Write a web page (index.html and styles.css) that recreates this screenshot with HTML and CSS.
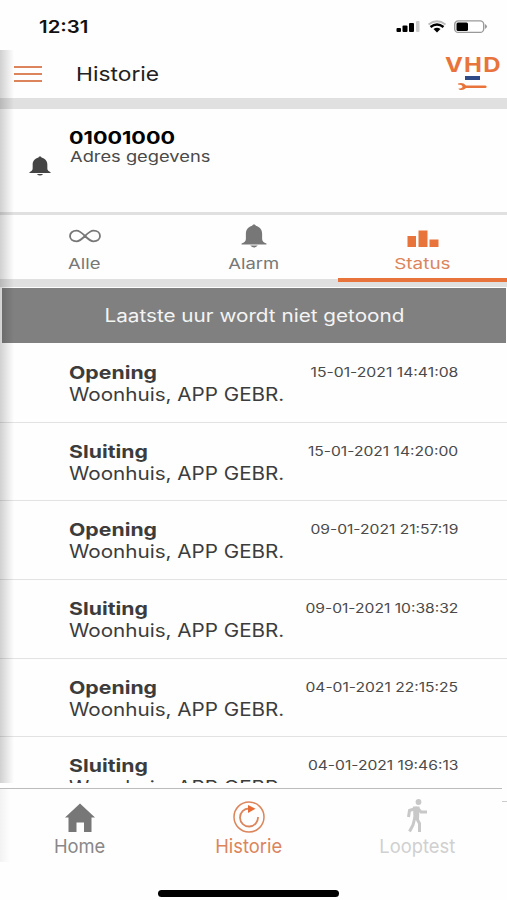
FILE: index.html
```html
<!DOCTYPE html>
<html lang="nl">
<head>
    <meta charset="utf-8">
    <title>Historie</title>
    <link rel="stylesheet" href="styles.css">
</head>
<body>

<!-- Statusbalk -->
<div class="statusbar">
    <span class="clock wide">12:31</span>
    <svg class="status-icons" width="92" height="16" viewBox="0 0 92 16">
        <rect x="0.500" y="8" width="4.500" height="4" rx="1" fill="#000"/>
        <rect x="6.500" y="5.500" width="5" height="6.500" rx="1" fill="#000"/>
        <rect x="13" y="3" width="5" height="9" rx="1" fill="#000"/>
        <rect x="20" y="1" width="3.500" height="11" rx="1" fill="#ccc"/>
        <path d="M32.500 4.500Q41-2 49.500 4.500" fill="none" stroke="#bbb" stroke-width="1.800"/>
        <path d="M34.500 7Q41 2 47.500 7" fill="none" stroke="#000" stroke-width="2.500"/>
        <path d="M37.500 9Q41 6.500 44.500 9L41 12.500Z" fill="#000"/>
        <rect x="58.700" y="0.900" width="29" height="11.500" rx="3.500" fill="none" stroke="#999" stroke-width="1.400"/>
        <rect x="60.500" y="2.500" width="11.500" height="8.500" rx="1.500" fill="#000"/>
        <path d="M89 4q4 2.500 0 5z" fill="#999"/>
    </svg>
</div>

<div class="screen">
    <!-- Kop met menu en logo -->
    <div class="header">
        <div class="menu"><i></i><i></i><i></i></div>
        <h1 class="wide">Historie</h1>
        <div class="logo">
            <span class="logo-text wide">VHD</span>
            <svg width="32" height="17" viewBox="0 0 32 17">
                <rect x="8" y="1" width="15" height="4" fill="#2f4a86"/>
                <path d="M1 8.500Q6 7 9 10.500H28.500Q31 11.800 28.500 13H9Q6 16 2 14.500L1.500 13.500Q5.500 13.500 5.500 11.500Q5 9.500 1 9.500Z" fill="#e8743b"/>
            </svg>
        </div>
    </div>

    <div class="device">
        <svg class="device-bell" width="22" height="20" viewBox="0 0 24 24" preserveAspectRatio="none"><path d="M12 0.500c-1 0-1.500.6-1.700 1.300C6.500 2.800 4 6 4 10v5c0 2-1.500 3.500-3.500 4.500v1h23v-1C21.500 18.500 20 17 20 15v-5c0-4-2.500-7.200-6.300-8.200C13.500 1.100 13 .5 12 .5zM8.500 21.500q3.500 4 7 0z"/></svg>
        <div>
            <div class="device-code wide">01001000</div>
            <div class="device-address wide">Adres gegevens</div>
        </div>
    </div>

    <!-- Tabbladen -->
    <div class="tabs">
        <div class="tab">
            <svg width="34" height="26" viewBox="0 0 34 26"><path d="M17 13C13.500 9.500 11.500 7.700 8.500 7.700C4.500 7.700 2 10 2 13S4.500 18.300 8.500 18.300C11.500 18.300 13.500 16.500 17 13S22.500 7.700 25.500 7.700C29.500 7.700 32 10 32 13S29.500 18.300 25.500 18.300C22.500 18.300 20.500 16.500 17 13Z" fill="none" stroke="#777" stroke-width="1.800"/></svg>
            <span class="wide">Alle</span>
        </div>
        <div class="tab">
            <svg width="26" height="26" viewBox="0 0 24 26" preserveAspectRatio="none"><path d="M12 1.500c-1 0-1.500.6-1.700 1.300C6.500 3.800 4.500 7 4.500 11v5c0 2-1.500 3.500-4 4.500v1h23v-1C21 19.500 19.500 18 19.500 16v-5c0-4-2-7.200-5.800-8.200C13.500 2.100 13 1.500 12 1.500zM8.500 22.500q3.500 4 7 0z" fill="#777"/></svg>
            <span class="wide">Alarm</span>
        </div>
        <div class="tab active">
            <svg width="32" height="26" viewBox="0 0 32 26"><path d="M.5 13h8.500v11H.5zM11.500 7.500h9V24h-9zM22.500 16.500h9V24h-9z" fill="#e8743b"/></svg>
            <span class="wide">Status</span>
        </div>
    </div>

    <div class="notice"><span class="wide">Laatste uur wordt niet getoond</span></div>

    <!-- Meldingen -->
    <div class="events">
        <div class="event">
            <div><b class="wide">Opening</b><p class="wide">Woonhuis, APP GEBR.</p></div>
            <time class="wide">15-01-2021 14:41:08</time>
        </div>
        <div class="event">
            <div><b class="wide">Sluiting</b><p class="wide">Woonhuis, APP GEBR.</p></div>
            <time class="wide">15-01-2021 14:20:00</time>
        </div>
        <div class="event">
            <div><b class="wide">Opening</b><p class="wide">Woonhuis, APP GEBR.</p></div>
            <time class="wide">09-01-2021 21:57:19</time>
        </div>
        <div class="event">
            <div><b class="wide">Sluiting</b><p class="wide">Woonhuis, APP GEBR.</p></div>
            <time class="wide">09-01-2021 10:38:32</time>
        </div>
        <div class="event">
            <div><b class="wide">Opening</b><p class="wide">Woonhuis, APP GEBR.</p></div>
            <time class="wide">04-01-2021 22:15:25</time>
        </div>
        <div class="event">
            <div><b class="wide">Sluiting</b><p class="wide">Woonhuis, APP GEBR.</p></div>
            <time class="wide">04-01-2021 19:46:13</time>
        </div>
    </div>
</div>

<!-- Navigatie onderaan -->
<div class="nav">
    <div class="nav-items">
        <div class="nav-item">
            <svg width="30" height="30" viewBox="0 0 30 30"><path d="M15 .5L30 14.500H26.500V29H19V19.500H11.500V29H3.500V14.500H0Z" fill="#777"/></svg>
            <span class="wide">Home</span>
        </div>
        <div class="nav-item active">
            <svg width="32" height="32" viewBox="0 0 32 32"><circle cx="16" cy="16" r="15" fill="none" stroke="#dc855c" stroke-width="1.500"/><path d="M18 7.500H16A9 9 0 1 0 25 16" fill="none" stroke="#dc855c" stroke-width="1.800"/><path d="M15 4L22.500 7.800L15 12Z" fill="#e86a35"/></svg>
            <span class="wide">Historie</span>
        </div>
        <div class="nav-item disabled">
            <svg width="22" height="34" viewBox="0 0 22 34"><circle cx="12.500" cy="3" r="2.900" fill="#c8c8c8"/><path d="M11 9L3.500 11.500L2.500 18M11.500 9L15 13L21 13M10.500 19L13.500 24.500V33M9 18L7 26L3.500 32.500" fill="none" stroke="#c8c8c8" stroke-width="3"/><path d="M7 7.500H13.500L13 21H7.500Z" fill="#c8c8c8"/></svg>
            <span class="wide">Looptest</span>
        </div>
    </div>
    <div class="nav-edge"></div>
</div>

<div class="home-indicator"></div>

</body>
</html>
```
FILE: styles.css
```css
/* Basis */
body {
    margin: 0;
    width: 507px;
    height: 900px;
    overflow: hidden;
    background: #fefefe;
    color: #3c3c3c;
    font-family: Inter, "Liberation Sans", sans-serif;
}

h1, p {
    margin: 0;
    font-weight: normal;
}

/* Brede letters */
.wide {
    display: block;
    white-space: nowrap;
    transform: scaleX(var(--stretch, 1.2));
    transform-origin: left center;
}

/* Statusbalk */
.statusbar {
    display: flex;
    justify-content: space-between;
    height: 50px;
    padding: 0 19px 0 39px;
    box-sizing: border-box;
}

.clock {
    --stretch: 1.2;
    margin-top: 16px;
    font-size: 17px;
    line-height: 22px;
    font-weight: 600;
    color: #111;
}

.status-icons {
    margin-top: 20px;
}

/* Scherm met schaduw aan de linkerkant */
.screen {
    position: relative;
    height: 733px;
}

.screen::after {
    content: "";
    position: absolute;
    left: 0;
    top: 0;
    width: 14px;
    height: 100%;
    background: linear-gradient(to right, rgba(0, 0, 0, 0.18), rgba(0, 0, 0, 0));
}

.header {
    display: flex;
    height: 48px;
    border-bottom: 11px solid #e0e0e0;
}

.menu {
    display: flex;
    flex-direction: column;
    gap: 4.5px;
    width: 28px;
    margin: 16px 0 0 14px;
}

.menu i {
    height: 2.3px;
    background: #dc855c;
}

.header h1 {
    --stretch: 1.2;
    margin: 12px 0 0 34px;
    font-size: 19px;
    line-height: 25px;
    color: #222;
}

.logo {
    width: 55px;
    margin: 6px 7px 0 auto;
}

.logo-text {
    --stretch: 1.2;
    font-size: 20px;
    line-height: 18px;
    font-weight: 700;
    letter-spacing: 1px;
    color: #e8743b;
}

.logo svg {
    display: block;
    margin: 1px 0 0 12px;
}

/* Aansluiting */
.device {
    display: flex;
    height: 103px;
    border-bottom: 3px solid #e0e0e0;
}

.device-bell {
    margin: 47px 18px 0 29px;
    fill: #444;
}

.device-code {
    --stretch: 1.2;
    margin-top: 18px;
    font-size: 18px;
    line-height: 21px;
    font-weight: 700;
    color: #000;
}

.device-address {
    --stretch: 1.22;
    margin-left: 1px;
    font-size: 15px;
    line-height: 18px;
    color: #4a4a4a;
}

/* Tabbladen */
.tabs {
    display: grid;
    grid-template-columns: repeat(3, 1fr);
    height: 72px;
    background: linear-gradient(to bottom, #fefefe 64px, #e0e0e0 64px);
}

.tab {
    display: flex;
    flex-direction: column;
    align-items: center;
    height: 67px;
    padding-top: 8px;
    box-sizing: border-box;
    font-size: 15px;
    line-height: 18px;
    color: #777;
}

.tab span {
    --stretch: 1.23;
    margin-top: 6px;
    transform-origin: center;
}

.tab.active {
    border-bottom: 4px solid #e8743b;
    color: #dc855c;
}

.tab.active span {
    --stretch: 1.26;
}

.notice {
    display: flex;
    justify-content: center;
    align-items: center;
    height: 55px;
    margin: 1px 1px 0 2px;
    background: #808080;
    color: #f4f4f4;
    font-size: 18px;
}

.notice span {
    --stretch: 1.15;
    transform-origin: center;
}

/* Meldingen */
.events {
    height: 440px;
    overflow: hidden;
}

.event {
    display: flex;
    justify-content: space-between;
    height: 78.7px;
    padding: 18px 49px 0 69px;
    box-sizing: border-box;
    border-bottom: 1.5px solid #e2e2e2;
}

.event:first-child {
    height: 79.5px;
    padding-top: 19px;
}

.event b {
    --stretch: 1.18;
    font-size: 18px;
    line-height: 22px;
}

.event p {
    --stretch: 1.147;
    font-size: 18px;
    line-height: 22px;
}

.event time {
    --stretch: 1.25;
    margin-top: 3px;
    transform-origin: right center;
    font-size: 12.5px;
    line-height: 16px;
    color: #4a4a4a;
}

.event:first-child time {
    --stretch: 1.26;
}

/* Navigatie */
.nav {
    display: flex;
    height: 74px;
    margin-top: 5px;
    background: linear-gradient(to right, #f2f2f2, #fefefe 10px);
}

.nav-items {
    display: grid;
    grid-template-columns: 160px 177px 160px;
    width: 502px;
    border-top: 1.5px solid #bbb;
}

.nav-edge {
    width: 5px;
    height: 1px;
    margin-top: 13px;
    background: #ccc;
}

.nav-item {
    display: flex;
    flex-direction: column;
    align-items: center;
    justify-content: flex-end;
    height: 69px;
    font-size: 19px;
    line-height: 22px;
    color: #888;
}

.nav-item span {
    --stretch: 0.965;
    margin-top: 3px;
    transform-origin: center;
}

.nav-item.active {
    color: #dc855c;
}

.nav-item.disabled {
    color: #d0d0d0;
}

.home-indicator {
    width: 181px;
    height: 7px;
    margin: 28px 0 0 158px;
    border-radius: 4px;
    background: #000;
}
```
